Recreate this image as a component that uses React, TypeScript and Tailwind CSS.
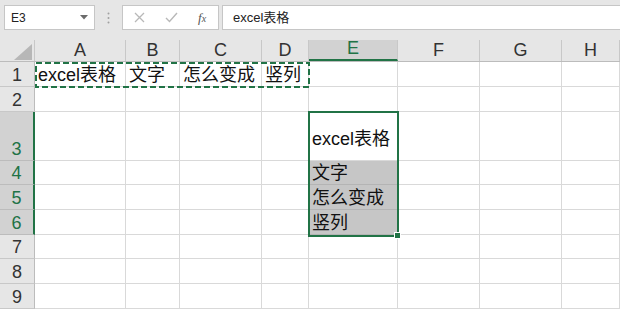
import React from "react";

type Col = { key: string; w: string };
type Row = { n: number; h: string };

const cols: Col[] = [
  { key: "A", w: "w-[91px]" },
  { key: "B", w: "w-[54px]" },
  { key: "C", w: "w-[82px]" },
  { key: "D", w: "w-[47px]" },
  { key: "E", w: "w-[89px]" },
  { key: "F", w: "w-[82px]" },
  { key: "G", w: "w-[82px]" },
  { key: "H", w: "w-[58px]" },
];

const rows: Row[] = [
  { n: 1, h: "h-[25px]" },
  { n: 2, h: "h-[25px]" },
  { n: 3, h: "h-[49px]" },
  { n: 4, h: "h-[24px]" },
  { n: 5, h: "h-[25px]" },
  { n: 6, h: "h-[25px]" },
  { n: 7, h: "h-[24px]" },
  { n: 8, h: "h-[25px]" },
  { n: 9, h: "h-[25px]" },
];

const data: Record<string, string> = {
  A1: "excel表格",
  B1: "文字",
  C1: "怎么变成",
  D1: "竖列",
  E3: "excel表格",
  E4: "文字",
  E5: "怎么变成",
  E6: "竖列",
};

const selectedRows = [3, 4, 5, 6];

function FormulaBar() {
  return (
    <div className="h-[40px] bg-[#e6e6e6] flex items-start pt-[5px]">
      <div className="ml-[4px] w-[91px] h-[25px] bg-white border border-[#c6c6c6] flex items-center justify-between pl-[6px] pr-[6px]">
        <span className="text-[12px] text-[#222]">E3</span>
        <svg width="8" height="5" viewBox="0 0 8 5">
          <polygon points="0,0 8,0 4,4.5" fill="#6b6b6b" />
        </svg>
      </div>
      <div className="w-[27px] h-[25px] flex items-center justify-center">
        <svg width="3" height="12" viewBox="0 0 3 12">
          <circle cx="1.5" cy="1.5" r="1" fill="#a0a0a0" />
          <circle cx="1.5" cy="6" r="1" fill="#a0a0a0" />
          <circle cx="1.5" cy="10.5" r="1" fill="#a0a0a0" />
        </svg>
      </div>
      <div className="w-[97px] h-[25px] bg-white border border-[#c6c6c6] flex items-center pl-[11px] gap-[20px]">
        <svg width="11" height="11" viewBox="0 0 11 11">
          <path d="M1 1 L10 10 M10 1 L1 10" stroke="#b8b8b8" strokeWidth="1.3" />
        </svg>
        <svg width="13" height="11" viewBox="0 0 13 11">
          <path d="M1 6 L4.5 9.5 L12 1" stroke="#b8b8b8" strokeWidth="1.4" fill="none" />
        </svg>
        <span className="font-['Liberation_Serif',serif] italic text-[13px] text-[#555] leading-none">
          f<span className="text-[10px]">x</span>
        </span>
      </div>
      <div className="ml-[3px] flex-1 h-[25px] bg-white border border-[#c6c6c6] border-r-0 flex items-center pl-[10px]">
        <span className="text-[13px] text-[#222]">excel表格</span>
      </div>
    </div>
  );
}

function ColumnHeaders() {
  return (
    <div className="h-[22px] flex bg-[#e6e6e6] border-b border-[#bcbcbc]">
      <div className="w-[35px] h-full border-r border-[#c8c8c8] relative">
        <svg className="absolute left-[14px] top-[4px]" width="18" height="16" viewBox="0 0 18 16">
          <polygon points="0,16 18,16 18,0" fill="#b7b7b7" />
        </svg>
      </div>
      {cols.map((c) => {
        const sel = c.key === "E";
        return (
          <div
            key={c.key}
            className={
              c.w +
              " h-full border-r border-[#c8c8c8] flex items-end justify-center pb-[1px] text-[18px] leading-[20px] " +
              (sel
                ? "bg-[#d2d2d2] text-[#217346] border-b-2 border-b-[#217346] -mb-px"
                : "text-[#333]")
            }
          >
            {c.key}
          </div>
        );
      })}
    </div>
  );
}

function Grid() {
  return (
    <div className="flex flex-col">
      {rows.map((r) => {
        const selRow = selectedRows.includes(r.n);
        return (
          <div key={r.n} className={r.h + " flex"}>
            <div
              className={
                "w-[35px] h-full border-b flex items-end justify-center text-[18px] leading-[21px] " +
                (selRow
                  ? "bg-[#d2d2d2] text-[#217346] border-b-[#bcbcbc] border-r-2 border-r-[#217346]"
                  : "bg-[#e6e6e6] text-[#333] border-b-[#c8c8c8] border-r border-r-[#bcbcbc]")
              }
            >
              {r.n}
            </div>
            {cols.map((c) => {
              const id = c.key + r.n;
              const txt = data[id];
              const fill = c.key === "E" && r.n >= 4 && r.n <= 6;
              return (
                <div
                  key={id}
                  className={
                    c.w +
                    " h-full border-r border-b border-[#d9d9d9] flex items-end whitespace-nowrap overflow-visible pl-[3px] text-[18px] text-[#111] " +
                    (fill ? "bg-[#c6c6c6] border-b-[#b4b4b4] " : "bg-white ") +
                    (id === "E3" ? "pb-[10px] leading-[21px]" : "leading-[21px]")
                  }
                >
                  {txt}
                </div>
              );
            })}
          </div>
        );
      })}
    </div>
  );
}

export default function App() {
  return (
    <div className="relative w-[620px] h-[309px] overflow-hidden bg-white font-['Liberation_Sans','Noto_Sans_CJK_SC',sans-serif]">
      <FormulaBar />
      <ColumnHeaders />
      <Grid />

      {/* copy marquee around A1:D1 */}
      <svg className="absolute left-[35px] top-[62px]" width="276" height="27" viewBox="0 0 276 27">
        <rect x="1" y="1" width="273" height="24" fill="none" stroke="#217346" strokeWidth="2" strokeDasharray="6 3" />
      </svg>

      {/* selection E3:E6 */}
      <div className="absolute left-[308px] top-[111px] w-[91px] h-[126px] border-2 border-[#217346]" />
      <div className="absolute left-[394px] top-[232px] w-[7px] h-[7px] bg-[#217346] border border-white" />
    </div>
  );
}
